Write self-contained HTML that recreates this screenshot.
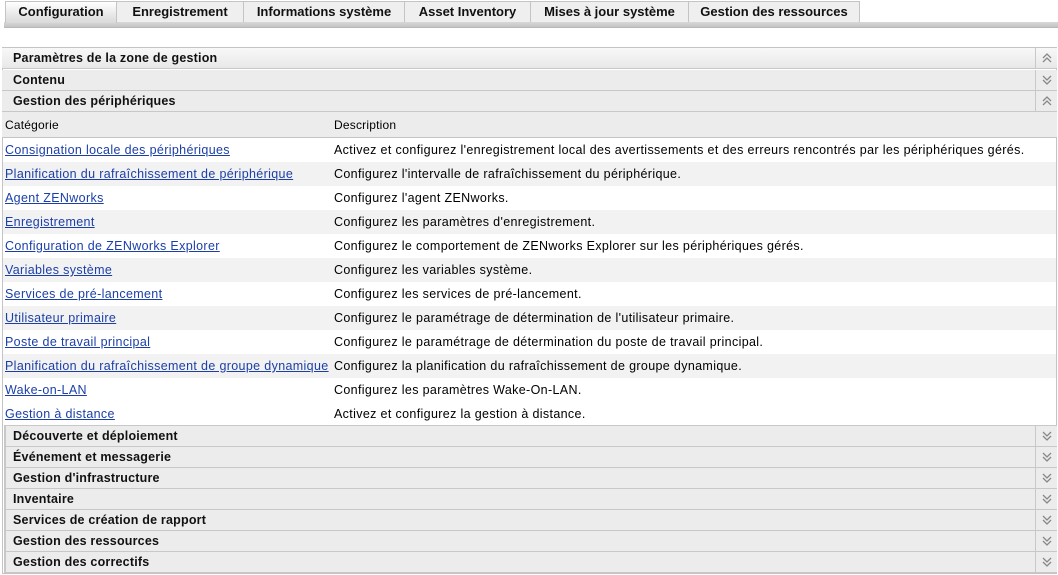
<!DOCTYPE html>
<html><head><meta charset="utf-8"><style>
*{margin:0;padding:0;box-sizing:border-box}
body{width:1058px;height:575px;background:#fff;font-family:"Liberation Sans",sans-serif;font-size:12px;color:#000;position:relative;overflow:hidden}
.tabbar{position:absolute;left:4px;top:22px;width:1054px;height:6px;background:linear-gradient(#d8d8d8,#c4c4c4);border-bottom:1px solid #b8b8b8}
.tab{position:absolute;top:1px;height:21px;border:1px solid #c4c4c4;border-bottom:none;background:#efefef;text-align:center;line-height:20px;font-size:13px;font-weight:bold;letter-spacing:0px;color:#111}
.tab.sel{background:linear-gradient(#ffffff,#d9d9d9);top:1px;height:22px}
.panel{position:absolute;left:2px;top:47px;width:1055px;height:527px;border:1px solid #c4c4c4}
.hd{position:absolute;left:2px;width:1055px;height:21px;background:#ececec;border-bottom:1px solid #c8c8c8;font-weight:bold;font-size:12.5px;letter-spacing:0.2px;line-height:21px;padding-left:11px;color:#111}
.hd.top{background:linear-gradient(#f8f8f8,#e8e8e8)}
.hd.ind{left:4px;width:1053px;border-left:2px solid #c8c8c8;padding-left:7px}
.ic{position:absolute;right:0;top:0;width:22px;height:100%;border-left:1px solid #c8c8c8}
.ic svg{position:absolute;left:6px;top:5px}
.colh{position:absolute;left:2px;top:112px;width:1055px;height:26px;background:#ececec;border-bottom:1px solid #c4c4c4;font-size:12px;line-height:26px;letter-spacing:0.2px}
.row{position:absolute;left:3px;width:1053px;height:24px;line-height:24px;font-size:12.5px;letter-spacing:0.35px}
.c1{position:absolute;left:2px;color:#1b3fa8;text-decoration:underline}
.c2{position:absolute;left:331px}
</style></head><body>
<div class="tabbar"></div>
<div class="tab sel" style="left:5px;width:112px">Configuration</div>
<div class="tab" style="left:116px;width:128px">Enregistrement</div>
<div class="tab" style="left:243px;width:162px">Informations système</div>
<div class="tab" style="left:404px;width:127px">Asset Inventory</div>
<div class="tab" style="left:530px;width:159px">Mises à jour système</div>
<div class="tab" style="left:688px;width:172px">Gestion des ressources</div>

<div class="panel"></div>
<div class="hd top" style="top:48px">Paramètres de la zone de gestion<div class="ic"><svg width="10" height="10"><path d="M1 5L5 1L9 5M1 9L5 5L9 9" fill="none" stroke="#888" stroke-width="1.3"/></svg></div></div>
<div class="hd" style="top:70px">Contenu<div class="ic"><svg width="10" height="10"><path d="M1 1L5 5L9 1M1 5L5 9L9 5" fill="none" stroke="#888" stroke-width="1.3"/></svg></div></div>
<div class="hd" style="top:91px">Gestion des périphériques<div class="ic"><svg width="10" height="10"><path d="M1 5L5 1L9 5M1 9L5 5L9 9" fill="none" stroke="#888" stroke-width="1.3"/></svg></div></div>
<div class="colh"><span style="position:absolute;left:3px">Catégorie</span><span style="position:absolute;left:332px">Description</span></div>

<div class="row" style="top:138px;background:#fff"><span class="c1">Consignation locale des périphériques</span><span class="c2">Activez et configurez l'enregistrement local des avertissements et des erreurs rencontrés par les périphériques gérés.</span></div>
<div class="row" style="top:162px;background:#f2f2f2"><span class="c1">Planification du rafraîchissement de périphérique</span><span class="c2">Configurez l'intervalle de rafraîchissement du périphérique.</span></div>
<div class="row" style="top:186px;background:#fff"><span class="c1">Agent ZENworks</span><span class="c2">Configurez l'agent ZENworks.</span></div>
<div class="row" style="top:210px;background:#f2f2f2"><span class="c1">Enregistrement</span><span class="c2">Configurez les paramètres d'enregistrement.</span></div>
<div class="row" style="top:234px;background:#fff"><span class="c1">Configuration de ZENworks Explorer</span><span class="c2">Configurez le comportement de ZENworks Explorer sur les périphériques gérés.</span></div>
<div class="row" style="top:258px;background:#f2f2f2"><span class="c1">Variables système</span><span class="c2">Configurez les variables système.</span></div>
<div class="row" style="top:282px;background:#fff"><span class="c1">Services de pré-lancement</span><span class="c2">Configurez les services de pré-lancement.</span></div>
<div class="row" style="top:306px;background:#f2f2f2"><span class="c1">Utilisateur primaire</span><span class="c2">Configurez le paramétrage de détermination de l'utilisateur primaire.</span></div>
<div class="row" style="top:330px;background:#fff"><span class="c1">Poste de travail principal</span><span class="c2">Configurez le paramétrage de détermination du poste de travail principal.</span></div>
<div class="row" style="top:354px;background:#f2f2f2"><span class="c1">Planification du rafraîchissement de groupe dynamique</span><span class="c2">Configurez la planification du rafraîchissement de groupe dynamique.</span></div>
<div class="row" style="top:378px;background:#fff"><span class="c1">Wake-on-LAN</span><span class="c2">Configurez les paramètres Wake-On-LAN.</span></div>
<div class="row" style="top:402px;background:#fff"><span class="c1">Gestion à distance</span><span class="c2">Activez et configurez la gestion à distance.</span></div>

<div class="hd ind" style="top:425px;border-top:1px solid #c8c8c8;height:22px">Découverte et déploiement<div class="ic"><svg width="10" height="10"><path d="M1 1L5 5L9 1M1 5L5 9L9 5" fill="none" stroke="#888" stroke-width="1.3"/></svg></div></div>
<div class="hd ind" style="top:447px">Événement et messagerie<div class="ic"><svg width="10" height="10"><path d="M1 1L5 5L9 1M1 5L5 9L9 5" fill="none" stroke="#888" stroke-width="1.3"/></svg></div></div>
<div class="hd ind" style="top:468px">Gestion d'infrastructure<div class="ic"><svg width="10" height="10"><path d="M1 1L5 5L9 1M1 5L5 9L9 5" fill="none" stroke="#888" stroke-width="1.3"/></svg></div></div>
<div class="hd ind" style="top:489px">Inventaire<div class="ic"><svg width="10" height="10"><path d="M1 1L5 5L9 1M1 5L5 9L9 5" fill="none" stroke="#888" stroke-width="1.3"/></svg></div></div>
<div class="hd ind" style="top:510px">Services de création de rapport<div class="ic"><svg width="10" height="10"><path d="M1 1L5 5L9 1M1 5L5 9L9 5" fill="none" stroke="#888" stroke-width="1.3"/></svg></div></div>
<div class="hd ind" style="top:531px">Gestion des ressources<div class="ic"><svg width="10" height="10"><path d="M1 1L5 5L9 1M1 5L5 9L9 5" fill="none" stroke="#888" stroke-width="1.3"/></svg></div></div>
<div class="hd ind" style="top:552px">Gestion des correctifs<div class="ic"><svg width="10" height="10"><path d="M1 1L5 5L9 1M1 5L5 9L9 5" fill="none" stroke="#888" stroke-width="1.3"/></svg></div></div>
</body></html>
